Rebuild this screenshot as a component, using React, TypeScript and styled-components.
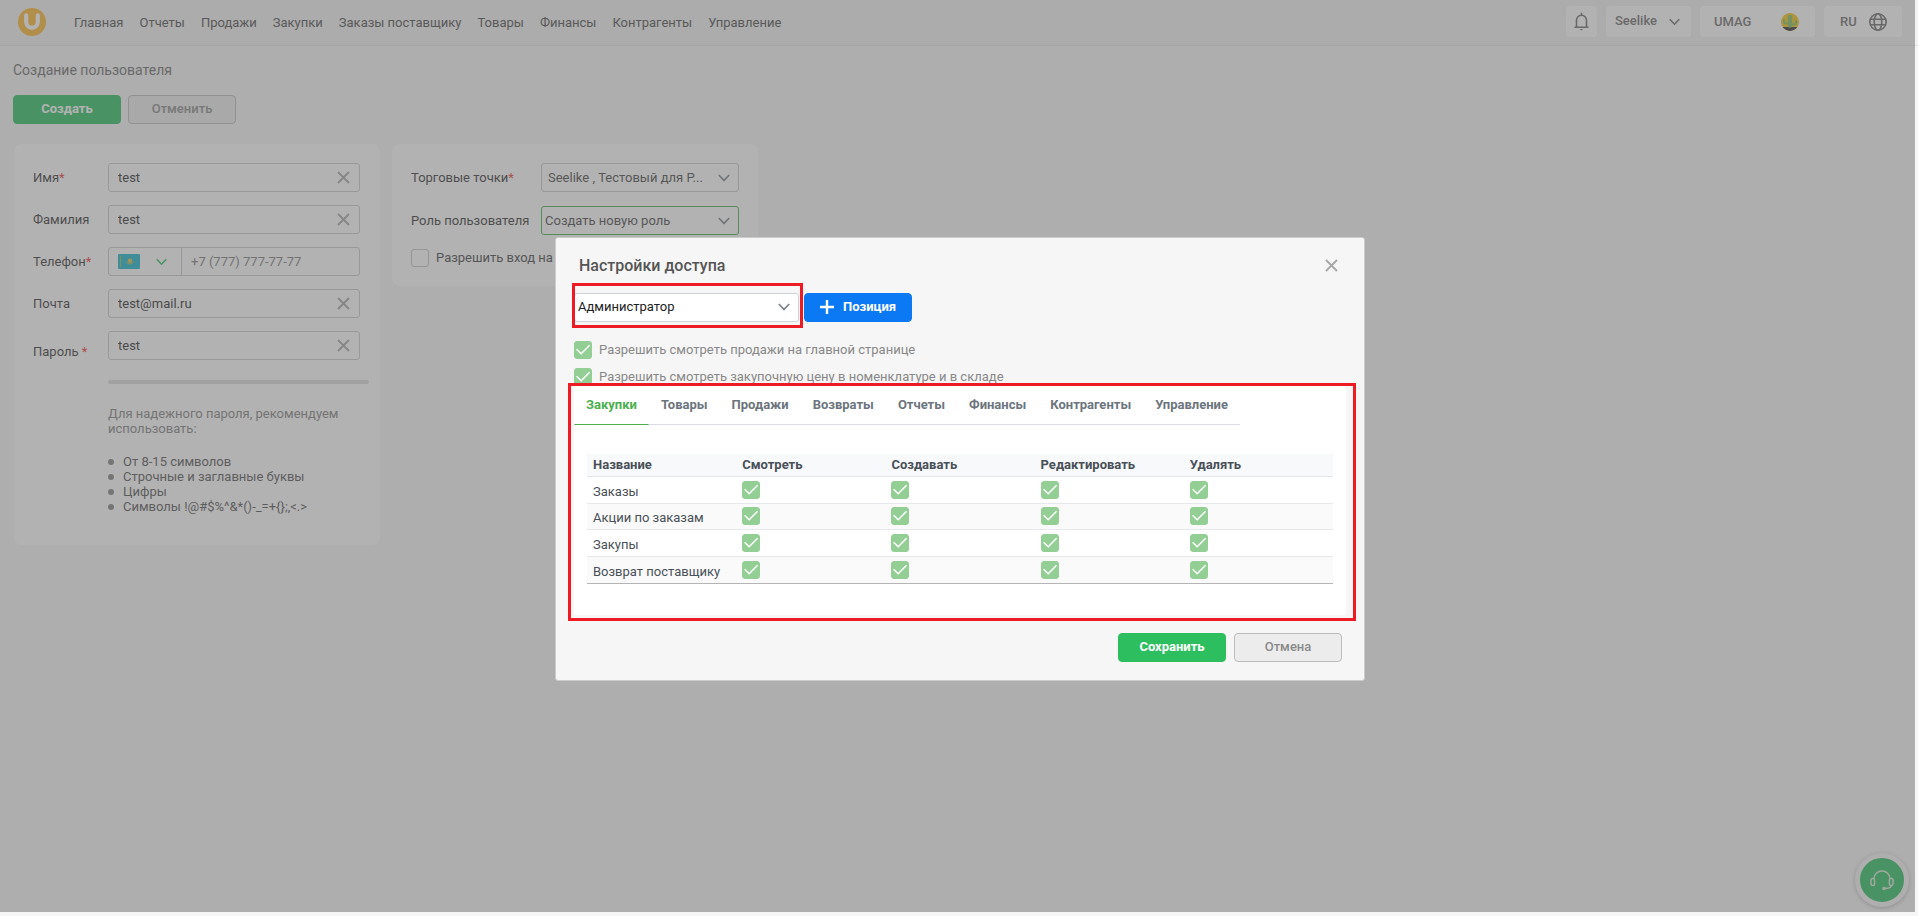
import React from "react";
import styled, { createGlobalStyle, css } from "styled-components";

const GlobalStyle = createGlobalStyle`
  *, *::before, *::after { box-sizing: border-box; }
  body {
    margin: 0;
    background: #f6f6f6;
    color: #444;
    font: 400 13px/16px Roboto, "Liberation Sans", sans-serif;
  }
  button, input, select { font: inherit; color: inherit; margin: 0; }
`;

const Page = styled.div`
  min-height: 100vh;
`;

const TopBar = styled.header`
  display: flex;
  align-items: center;
  height: 46px;
  padding: 0 16px 2px 18px;
  background: #f2f2f2;
  border-bottom: 1px solid #e2e2e2;
`;

const Logo = styled.a`
  display: flex;
  width: 28px;
  height: 28px;
  margin-right: 28px;
`;

const Nav = styled.nav`
  display: flex;
  gap: 16px;
  padding-top: 2px;
`;

const NavLink = styled.a`
  color: #4c4c4c;
  text-decoration: none;
  white-space: nowrap;
`;

const TopTools = styled.div`
  display: flex;
  gap: 9px;
  margin-left: auto;
`;

const toolBox = css`
  display: flex;
  align-items: center;
  justify-content: space-between;
  height: 31px;
  border: 0;
  border-radius: 4px;
  background: #fff;
  color: #6c6c6c;
  font-weight: 500;
`;

const ToolButton = styled.button<{ $width: number; $pad?: string }>`
  ${toolBox}
  width: ${(p) => p.$width}px;
  padding: ${(p) => p.$pad ?? "0 8px"};
`;

const Stack = styled.span`
  display: grid;
  align-items: center;
  > * { grid-area: 1 / 1; }
  > svg { justify-self: end; pointer-events: none; }
`;

const ShopSelect = styled.select`
  ${toolBox}
  appearance: none;
  width: 85px;
  padding: 0 9px 2px;
`;

const ShopStack = styled(Stack)`
  > svg { margin-right: 11px; }
`;

const Main = styled.main`
  padding: 16px 13px;
`;

const PageTitle = styled.h1`
  margin: 0 0 17px;
  color: #6c6c6c;
  font-size: 14px;
  font-weight: 400;
  line-height: 16px;
`;

const Actions = styled.div`
  display: flex;
  gap: 7px;
`;

const Button = styled.button<{ $kind: "primary" | "plain" | "blue" }>`
  display: flex;
  align-items: center;
  justify-content: center;
  gap: 9px;
  width: 108px;
  height: 29px;
  padding: 0 0 1px;
  border: 1px solid;
  border-radius: 4px;
  font-weight: ${(p) => (p.$kind === "plain" ? 500 : 700)};
  ${(p) =>
    p.$kind === "primary"
      ? css`background: #2dbe60; border-color: #2dbe60; color: #fff;`
      : p.$kind === "blue"
        ? css`background: #0b79f3; border-color: #0b79f3; color: #fff;`
        : css`background: #ececec; border-color: #bcbcbc; color: #8a8a8a;`}
`;

const Cards = styled.div`
  display: flex;
  align-items: flex-start;
  gap: 12px;
  padding: 20px 1px 0;
`;

const Card = styled.section`
  width: 366px;
  padding: 19px;
  border-radius: 8px;
  background: #fff;
`;

const Form = styled.form<{ $gap: number }>`
  display: flex;
  flex-direction: column;
  gap: ${(p) => p.$gap}px;
`;

const Field = styled.div<{ $label: number }>`
  display: grid;
  grid-template-columns: ${(p) => p.$label}px 1fr;
  align-items: center;
`;

const Label = styled.label`
  white-space: nowrap;
  color: #343434;
`;

const Required = styled.span`
  color: #e33;
`;

const control = css`
  width: 100%;
  height: 29px;
  border: 1px solid #cbcbcb;
  border-radius: 3px;
  background: transparent;
  outline: none;
`;

const InputStack = styled(Stack)<{ $below: number }>`
  width: 252px;
  padding-bottom: ${(p) => p.$below}px;
`;

const TextInput = styled.input`
  ${control}
  padding: 0 34px 0 9px;
  color: #2c2c2c;
`;

const ClearButton = styled.button`
  display: flex;
  justify-self: end;
  margin-right: 10px;
  padding: 0;
  border: 0;
  background: none;
`;

const PhoneGroup = styled.div`
  ${control}
  display: flex;
  width: 252px;
`;

const CountryButton = styled.button`
  display: flex;
  align-items: center;
  gap: 16px;
  width: 73px;
  padding: 0 0 0 9px;
  border: 0;
  border-right: 1px solid #cbcbcb;
  background: none;
`;

const PhoneInput = styled.input`
  flex: 1;
  min-width: 0;
  padding: 0 9px;
  border: 0;
  background: none;
  outline: none;
  &::placeholder { color: #808080; opacity: 1; }
`;

const PasswordHelp = styled.div`
  padding: 8px 0 12px 75px;
`;

const StrengthBar = styled.div`
  height: 4px;
  width: 261px;
  border-radius: 2px;
  background: #dcdcdc;
`;

const Hint = styled.p`
  margin: 22px 0 18px;
  color: #828282;
  line-height: 15px;
`;

const RuleList = styled.ul`
  margin: 0;
  padding: 0;
  list-style: none;
  color: #555;
  line-height: 15px;
`;

const Rule = styled.li`
  display: flex;
  align-items: center;
  gap: 9px;
  &::before {
    content: "";
    width: 6px;
    height: 6px;
    border-radius: 50%;
    background: #858585;
  }
`;

const SelectStack = styled(Stack)`
  > svg { margin-right: 9px; }
`;

const Select = styled.select<{ $active?: boolean; $white?: boolean; $pad: number }>`
  ${control}
  appearance: none;
  padding: 0 34px 0 ${(p) => p.$pad}px;
  border-color: ${(p) => (p.$active ? "#4caf50" : p.$white ? "#ced4da" : "#cbcbcb")};
  background: ${(p) => (p.$white ? "#fff" : "transparent")};
  color: ${(p) => (p.$white ? "#222" : "#484848")};
`;

const CheckRow = styled.label`
  display: flex;
  align-items: center;
  gap: 7px;
`;

const CheckStack = styled(Stack)`
  width: 18px;
  height: 18px;
`;

const CheckBox = styled.input`
  appearance: none;
  width: 18px;
  height: 18px;
  border: 1px solid #c4c4c4;
  border-radius: 3px;
  &:checked { background: #93ce95; border-color: #93ce95; }
`;

const Backdrop = styled.div`
  position: fixed;
  inset: 0 3px 4px 0;
  background: rgba(102, 102, 102, 0.5);
`;

const SupportButton = styled.button`
  position: fixed;
  right: 9px;
  bottom: 9px;
  display: flex;
  align-items: center;
  justify-content: center;
  width: 54px;
  height: 54px;
  padding: 0;
  border: 5px solid #f6f6f6;
  border-radius: 50%;
  background: #2dbe60;
  box-shadow: 0 1px 4px rgba(0, 0, 0, 0.25);
`;

const DialogLayer = styled.div`
  position: fixed;
  inset: 0;
  display: flex;
  align-items: center;
  justify-content: center;
  padding: 1px 0 0 2px;
`;

const Dialog = styled.div`
  width: 810px;
  padding: 19px 18px 18px;
  border: 1px solid #ccc;
  border-radius: 3px;
  background: #f6f6f6;
`;

const DialogHead = styled.div`
  display: flex;
  align-items: center;
  justify-content: space-between;
  padding: 0 8px 0 5px;
`;

const DialogTitle = styled.h2`
  margin: 0;
  color: #555;
  font-size: 16px;
  font-weight: 500;
  line-height: 18px;
`;

const CloseButton = styled.button`
  display: flex;
  padding: 0;
  border: 0;
  background: none;
`;

const Toolbar = styled.div`
  position: relative;
  display: flex;
  align-items: center;
  gap: 5px;
  margin-top: 18px;
`;

const RoleStack = styled(SelectStack)`
  width: 225px;
`;

const Highlight = styled.div<{ $inset: string }>`
  position: absolute;
  inset: ${(p) => p.$inset};
  border: 3px solid #ed1c24;
  pointer-events: none;
`;

const Permissions = styled.div`
  display: flex;
  flex-direction: column;
  gap: 9px;
  margin-top: 19px;
  color: #888;
`;

const TabPanel = styled.div`
  position: relative;
  width: 772px;
  padding-bottom: 31px;
  border-radius: 3px;
  background: #fff;
`;

const TabList = styled.div`
  display: inline-flex;
  border-bottom: 1px solid #dcdce6;
`;

const Tab = styled.button<{ $active?: boolean }>`
  height: 39px;
  margin-bottom: -1px;
  padding: 0 11px 1px;
  border: 1px solid transparent;
  border-bottom-color: ${(p) => (p.$active ? "#4caf50" : "transparent")};
  background: none;
  color: ${(p) => (p.$active ? "#4caf50" : "#6c757d")};
  font-weight: 700;
`;

const RightsTable = styled.table`
  width: 746px;
  margin: 29px 13px 0;
  table-layout: fixed;
  border-collapse: separate;
  border-spacing: 0;
  border-bottom: 1px solid #b5b5b5;
  color: #495057;
`;

const HeadCell = styled.th`
  height: 23px;
  padding: 0 6px;
  border-bottom: 1px solid #e3e6ea;
  background: #f8f9fb;
  text-align: left;
  font-weight: 700;
`;

const BodyRow = styled.tr`
  height: 27px;
  &:nth-child(even) { height: 26px; background: #fafafa; }
  &:last-child > td { border-bottom: 0; }
`;

const NameCell = styled.td`
  padding: 4px 6px 0;
  border-bottom: 1px solid #e6e8ec;
  white-space: nowrap;
`;

const CheckCell = styled.td`
  padding: 0 6px;
  border-bottom: 1px solid #e6e8ec;
`;

const DialogFoot = styled.div`
  display: flex;
  justify-content: flex-end;
  gap: 8px;
  margin-top: 18px;
  padding-right: 4px;
`;

const Chevron = ({ color = "#7f858b", width = 12 }: { color?: string; width?: number }) => (
  <svg width={width} height="8" viewBox="0 0 12 8" fill="none" stroke={color} strokeWidth="1.7" aria-hidden>
    <path d="M.8 1 6 6.4 11.2 1" />
  </svg>
);

const Cross = () => (
  <svg width="13" height="13" viewBox="0 0 13 13" fill="none" stroke="#a6a6a6" strokeWidth="1.8" aria-hidden>
    <path d="m1 1 11 11M12 1 1 12" />
  </svg>
);

function Check({ label, on }: { label?: string; on?: boolean }) {
  return (
    <CheckStack>
      <CheckBox type="checkbox" aria-label={label} defaultChecked={on} />
      {on && (
        <svg width="18" height="18" viewBox="0 0 18 18" fill="none" stroke="#fff" strokeWidth="1.5" aria-hidden>
          <path d="m2.6 8.2 4.6 4.6 8.4-8.6" />
        </svg>
      )}
    </CheckStack>
  );
}

function ClearableField({ id, label, value, required, below = 0 }: {
  id: string; label: string; value: string; required?: boolean; below?: number;
}) {
  return (
    <Field $label={75}>
      <Label htmlFor={id}>{label}{required && <Required>*</Required>}</Label>
      <InputStack $below={below}>
        <TextInput id={id} type="text" defaultValue={value} />
        <ClearButton type="button" aria-label="Очистить"><Cross /></ClearButton>
      </InputStack>
    </Field>
  );
}

const navItems = ["Главная", "Отчеты", "Продажи", "Закупки", "Заказы поставщику", "Товары", "Финансы", "Контрагенты", "Управление"];
const tabs = ["Закупки", "Товары", "Продажи", "Возвраты", "Отчеты", "Финансы", "Контрагенты", "Управление"];
const rights = ["Смотреть", "Создавать", "Редактировать", "Удалять"];
const entities = ["Заказы", "Акции по заказам", "Закупы", "Возврат поставщику"];
const rules = ["От 8-15 символов", "Строчные и заглавные буквы", "Цифры", "Символы !@#$%^&*()-_=+{};,<.>"];

export default function App() {
  return (
    <Page>
      <GlobalStyle />
      <TopBar>
        <Logo href="#" aria-label="UMAG">
          <svg width="28" height="28" viewBox="0 0 28 28" aria-hidden>
            <circle cx="14" cy="14" r="14" fill="#ffb630" />
            <path d="M8.2 7.3v6.6a5.8 5.8 0 0 0 11.6 0V7.3" fill="none" stroke="#fff" strokeWidth="4.2" strokeLinecap="round" />
          </svg>
        </Logo>
        <Nav>
          {navItems.map((n) => <NavLink key={n} href="#">{n}</NavLink>)}
        </Nav>
        <TopTools>
          <ToolButton $width={31} aria-label="Уведомления">
            <svg width="15" height="19" viewBox="0 0 15 19" fill="none" stroke="#6c6c6c" strokeWidth="1.6" aria-hidden>
              <path d="M.5 15.2h14M2.5 15V8.3a5 5 0 0 1 10 0V15M7.5 3.3V.8" />
              <path d="M5.8 17h3.4l-1.7 1.6Z" fill="#6c6c6c" stroke="none" />
            </svg>
          </ToolButton>
          <ShopStack>
            <ShopSelect aria-label="Магазин"><option>Seelike</option></ShopSelect>
            <Chevron width={11} color="#6c6c6c" />
          </ShopStack>
          <ToolButton $width={115} $pad="0 16px 0 14px">
            UMAG
            <svg width="18" height="18" viewBox="0 0 18 18" aria-hidden>
              <circle cx="9" cy="9" r="9" fill="#f2c413" />
              <path d="M1.6 14h14.8A9 9 0 0 1 1.6 14Z" fill="#333" />
              <g fill="none" stroke="#86bd5c" strokeLinecap="round">
                <path d="M9 12.500V4" strokeWidth="4.500" />
                <path d="M9 10.500H5a2 2 0 0 1-2-2V7M9 11.500h4a2 2 0 0 0 2-2V8" strokeWidth="2.200" />
              </g>
            </svg>
          </ToolButton>
          <ToolButton $width={78} $pad="0 15px 0 16px">
            RU
            <svg width="18" height="18" viewBox="0 0 18 18" fill="none" stroke="#6c6c6c" strokeWidth="1.6" aria-hidden>
              <circle cx="9" cy="9" r="8.2" />
              <ellipse cx="9" cy="9" rx="3.8" ry="8.2" />
              <path d="M1.4 6.2h15.2M1.4 11.8h15.2" />
            </svg>
          </ToolButton>
        </TopTools>
      </TopBar>

      <Main>
        <PageTitle>Создание пользователя</PageTitle>
        <Actions>
          <Button $kind="primary">Создать</Button>
          <Button $kind="plain">Отменить</Button>
        </Actions>
        <Cards>
          <Card>
            <Form $gap={13}>
              <ClearableField id="name" label="Имя" value="test" required />
              <ClearableField id="surname" label="Фамилия" value="test" />
              <Field $label={75}>
                <Label htmlFor="phone">Телефон<Required>*</Required></Label>
                <PhoneGroup>
                  <CountryButton type="button" aria-label="Казахстан">
                    <svg width="22" height="15" viewBox="0 0 22 15" aria-hidden>
                      <rect width="22" height="15" rx="1" fill="#19b5ca" />
                      <path d="M2.5 1.5v12" stroke="#8cb868" strokeWidth="1.2" />
                      <circle cx="12" cy="6.8" r="2.3" fill="#d9c24c" />
                      <path d="M8 7.5q4 5 8 0" fill="none" stroke="#b9bd5a" />
                    </svg>
                    <Chevron width={11} color="#2dbe60" />
                  </CountryButton>
                  <PhoneInput id="phone" type="tel" placeholder="+7 (777) 777-77-77" />
                </PhoneGroup>
              </Field>
              <ClearableField id="mail" label="Почта" value="test@mail.ru" />
              <ClearableField id="password" label="Пароль " value="test" required below={12} />
            </Form>
            <PasswordHelp>
              <StrengthBar />
              <Hint>Для надежного пароля, рекомендуем использовать:</Hint>
              <RuleList>
                {rules.map((r) => <Rule key={r}>{r}</Rule>)}
              </RuleList>
            </PasswordHelp>
          </Card>
          <Card>
            <Form $gap={14}>
              <Field $label={130}>
                <Label htmlFor="shops">Торговые точки<Required>*</Required></Label>
                <SelectStack>
                  <Select id="shops" $pad={6}><option>Seelike , Тестовый для Р...</option></Select>
                  <Chevron />
                </SelectStack>
              </Field>
              <Field $label={130}>
                <Label htmlFor="role">Роль пользователя</Label>
                <SelectStack>
                  <Select id="role" $pad={3} $active><option>Создать новую роль</option></Select>
                  <Chevron />
                </SelectStack>
              </Field>
              <CheckRow>
                <Check />
                Разрешить вход на кассу
              </CheckRow>
            </Form>
          </Card>
        </Cards>
      </Main>

      <SupportButton aria-label="Поддержка">
        <svg width="24" height="21" viewBox="0 0 24 21" fill="none" stroke="#d8ecd8" strokeWidth="1.5" aria-hidden>
          <path d="M4 8.5a8 7.5 0 0 1 16 0M21 15.500q0 3-6 3" />
          <rect x="1" y="8.5" width="3.6" height="7" rx="1.5" />
          <rect x="19.4" y="8.5" width="3.6" height="7" rx="1.5" />
          <circle cx="14" cy="18.5" r="1" />
        </svg>
      </SupportButton>

      <Backdrop />
      <DialogLayer>
        <Dialog role="dialog" aria-labelledby="dialog-title">
          <DialogHead>
            <DialogTitle id="dialog-title">Настройки доступа</DialogTitle>
            <CloseButton aria-label="Закрыть"><Cross /></CloseButton>
          </DialogHead>
          <Toolbar>
            <RoleStack>
              <Select aria-label="Должность" $pad={3} $white><option>Администратор</option></Select>
              <Chevron />
            </RoleStack>
            <Button $kind="blue">
              <svg width="14" height="14" viewBox="0 0 14 14" stroke="#fff" strokeWidth="2.4" aria-hidden>
                <path d="M7 0v14M0 7h14" />
              </svg>
              Позиция
            </Button>
            <Highlight $inset="-10px 543px -6px -2px" />
          </Toolbar>
          <Permissions>
            <CheckRow><Check on />Разрешить смотреть продажи на главной странице</CheckRow>
            <CheckRow><Check on />Разрешить смотреть закупочную цену в номенклатуре и в складе</CheckRow>
          </Permissions>
          <TabPanel>
            <TabList role="tablist">
              {tabs.map((t, i) => <Tab key={t} role="tab" aria-selected={i === 0} $active={i === 0}>{t}</Tab>)}
            </TabList>
            <RightsTable>
              <thead>
                <tr>
                  <HeadCell>Название</HeadCell>
                  {rights.map((r) => <HeadCell key={r}>{r}</HeadCell>)}
                </tr>
              </thead>
              <tbody>
                {entities.map((e) => (
                  <BodyRow key={e}>
                    <NameCell>{e}</NameCell>
                    {rights.map((r) => <CheckCell key={r}><Check on label={`${e}: ${r}`} /></CheckCell>)}
                  </BodyRow>
                ))}
              </tbody>
            </RightsTable>
            <Highlight $inset="-3px -10px -6px -6px" />
          </TabPanel>
          <DialogFoot>
            <Button $kind="primary">Сохранить</Button>
            <Button $kind="plain">Отмена</Button>
          </DialogFoot>
        </Dialog>
      </DialogLayer>
    </Page>
  );
}
